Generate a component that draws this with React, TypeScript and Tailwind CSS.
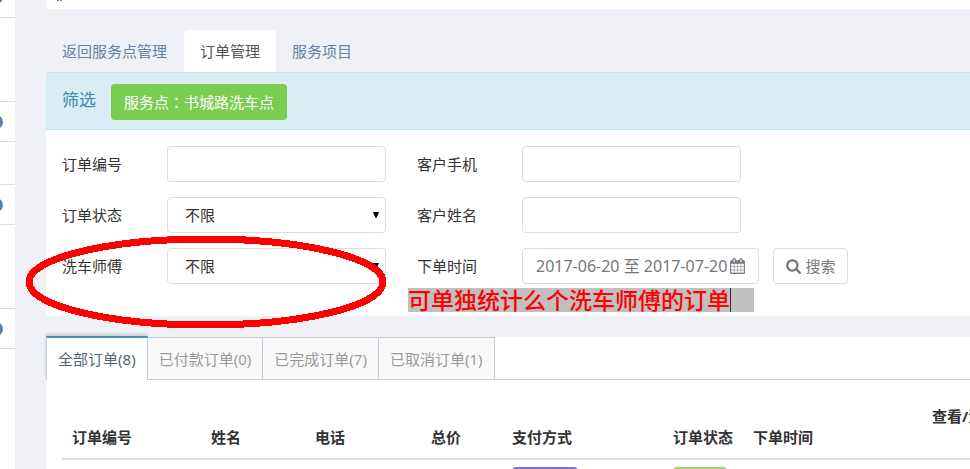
import React, { useState } from 'react';

const NAV = ['返回服务点管理', '订单管理', '服务项目'];

const ORDER_TABS = [
	{ label: '全部订单', count: 8 },
	{ label: '已付款订单', count: 0 },
	{ label: '已完成订单', count: 7 },
	{ label: '已取消订单', count: 1 },
];

const COLUMNS = [
	{ title: '订单编号', width: 'w-[139px]' },
	{ title: '姓名', width: 'w-[104px]' },
	{ title: '电话', width: 'w-[116px]' },
	{ title: '总价', width: 'w-[81px]' },
	{ title: '支付方式', width: 'w-[161px]' },
	{ title: '订单状态', width: 'w-20' },
	{ title: '下单时间', width: 'w-[179px]' },
];

// sidebar rows: height and whether the row carries a badge
const SIDE_ROWS = [
	{ height: 'h-[18px]', badge: 'top-[-10px]' },
	{ height: 'h-[84px]', badge: '' },
	{ height: 'h-10', badge: 'top-[13px]' },
	{ height: 'h-[43px]', badge: '' },
	{ height: 'h-10', badge: 'top-[13px]' },
	{ height: 'h-[84px]', badge: '' },
	{ height: 'h-10', badge: 'top-[13px]' },
];

function CalendarIcon() {
	return (
		<svg viewBox="0 0 1664 1792" className="w-[15px] h-4 fill-current" aria-hidden="true">
			<path d="M128 1664h288v-288h-288v288zm352 0h320v-288h-320v288zm-352-352h288v-320h-288v320zm352 0h320v-320h-320v320zm-352-384h288v-288h-288v288zm736 736h320v-288h-320v288zm-384-736h320v-288h-320v288zm768 736h288v-288h-288v288zm-384-352h320v-320h-320v320zm-352-864v-288q0-13-9.5-22.5t-22.5-9.5h-64q-13 0-22.5 9.5t-9.5 22.5v288q0 13 9.5 22.5t22.5 9.5h64q13 0 22.5-9.5t9.5-22.5zm736 864h288v-320h-288v320zm-384-384h320v-288h-320v288zm384 0h288v-288h-288v288zm32-480v-288q0-13-9.5-22.5t-22.5-9.5h-64q-13 0-22.5 9.5t-9.5 22.5v288q0 13 9.5 22.5t22.5 9.5h64q13 0 22.5-9.5t9.5-22.5zm384-64v1280q0 52-38 90t-90 38h-1408q-52 0-90-38t-38-90v-1280q0-52 38-90t90-38h128v-96q0-66 47-113t113-47h64q66 0 113 47t47 113v96h384v-96q0-66 47-113t113-47h64q66 0 113 47t47 113v96h128q52 0 90 38t38 90z" />
		</svg>
	);
}

function SearchIcon() {
	return (
		<svg viewBox="0 0 1664 1792" className="w-[15px] h-4 fill-current" aria-hidden="true">
			<path d="M1152 832q0-185-131.5-316.5t-316.5-131.5-316.5 131.5-131.5 316.5 131.5 316.5 316.5 131.5 316.5-131.5 131.5-316.5zm512 832q0 52-38 90t-90 38q-54 0-90-38l-343-342q-179 124-399 124-143 0-273.5-55.5t-225-150-150-225-55.5-273.5 55.5-273.5 150-225 225-150 273.5-55.5 273.5 55.5 225 150 150 225 55.5 273.5q0 220-124 399l343 343q37 37 37 90z" />
		</svg>
	);
}

function TextField({ id, label }: { id: string; label: string }) {
	return (
		<>
			<label htmlFor={id}>{label}</label>
			<input
				id={id}
				type="text"
				className="h-9 w-full rounded border border-[#dddddd] bg-white px-3"
			/>
		</>
	);
}

function SelectField({ id, label }: { id: string; label: string }) {
	return (
		<>
			<label htmlFor={id}>{label}</label>
			<div className="relative">
				<select
					id={id}
					className="block h-9 w-full appearance-none rounded border border-[#dddddd] bg-white px-[17px]"
				>
					<option>不限</option>
				</select>
				<svg
					viewBox="0 0 6 6"
					className="pointer-events-none absolute right-[7px] top-[15px] size-[6px]"
					aria-hidden="true"
				>
					<path d="M0 0h6L3.5 6h-1z" />
				</svg>
			</div>
		</>
	);
}

function Sidebar() {
	return (
		<aside className="w-[15px] shrink-0 overflow-hidden bg-white">
			{SIDE_ROWS.map((row, i) => (
				<div
					key={i}
					className={`relative border-b border-[#dddddd] ${row.height}`}
				>
					{row.badge ? (
						<span
							className={`absolute left-[-11px] size-[14px] rounded-full bg-[#5a7fae] ${row.badge}`}
						/>
					) : null}
				</div>
			))}
		</aside>
	);
}

function FilterPanel() {
	return (
		<section className="relative rounded-bl bg-white">
			<div className="flex items-start gap-[15px] border-b border-[#bce8f1] bg-[#d9edf5] px-4 pt-[11px] pb-[9px]">
				<h2 className="text-[17px] leading-8 text-[#3e89ae]">筛选</h2>
				<button
					type="button"
					className="h-9 rounded bg-[#7acd50] px-[13px] text-white"
				>
					服务点
					<span className="font-['Noto_Sans_CJK_TC',sans-serif]">：</span>
					书城路洗车点
				</button>
			</div>
			<form
				className="grid grid-cols-[105px_219px_31px_105px_219px_1fr] items-center gap-y-[15px] px-4 pb-8 pt-4"
				onSubmit={(e) => e.preventDefault()}
			>
				<TextField id="order-no" label="订单编号" />
				<span />
				<TextField id="phone" label="客户手机" />
				<span />

				<SelectField id="status" label="订单状态" />
				<span />
				<TextField id="name" label="客户姓名" />
				<span />

				<SelectField id="worker" label="洗车师傅" />
				<span />
				<label htmlFor="range">下单时间</label>
				<div className="col-span-2 flex gap-[14px] text-[#777777]">
					<button
						id="range"
						type="button"
						className="flex h-9 items-center gap-[3px] whitespace-nowrap rounded border border-[#dddddd] px-[13px] text-base"
					>
						2017-06-20 至 2017-07-20
						<CalendarIcon />
					</button>
					<button
						type="submit"
						className="flex h-9 items-center gap-1 whitespace-nowrap rounded border border-[#dddddd] px-3"
					>
						<SearchIcon />
						搜索
					</button>
				</div>
			</form>

			{/* handwritten notes over the form */}
			<svg
				viewBox="0 0 360 94"
				className="pointer-events-none absolute left-[-20px] top-[163px] h-[94px] w-[360px]"
				shapeRendering="crispEdges"
				aria-hidden="true"
			>
				<ellipse
					cx="180"
					cy="46"
					rx="177"
					ry="43"
					fill="none"
					stroke="#ff0000"
					strokeWidth="7"
				/>
			</svg>
			<p className="absolute left-[362px] top-[215px] flex h-6 w-[346px] items-center whitespace-nowrap bg-[#c0c0c0] text-[23px] leading-6 font-medium text-[#ff0000]">
				可单独统计么个洗车师傅的订单
				<span className="h-6 w-px bg-[#333333]" />
			</p>
		</section>
	);
}

function Orders() {
	const [active, setActive] = useState(0);

	return (
		<section className="mt-[21px] bg-white">
			<div className="flex border-b border-[#c3ccd8]" role="tablist">
				{ORDER_TABS.map((tab, i) => (
					<button
						key={tab.label}
						type="button"
						role="tab"
						aria-selected={i === active}
						onClick={() => setActive(i)}
						className={
							i === active
								? '-mt-px -mb-px h-11 border-x border-t-2 border-x-[#c3ccd8] border-t-[#4c8fbd] bg-white px-[11px] text-[#576373] shadow-[0_-2px_3px_0_rgba(0,0,0,0.15)]'
								: 'h-[42px] border-r border-t border-[#c3ccd8] bg-[#f9f9f9] px-[11px] text-[#999999]'
						}
					>
						{tab.label}({tab.count})
					</button>
				))}
			</div>
			<div className="pl-4 pt-[15px]">
				<table className="w-full table-fixed text-left">
					<thead>
						<tr className="h-[64px] border-b-2 border-[#dddddd] align-bottom text-[#333333]">
							{COLUMNS.map((col) => (
								<th
									key={col.title}
									className={`px-[10px] pb-[10px] leading-[21px] font-bold whitespace-nowrap ${col.width}`}
								>
									{col.title}
								</th>
							))}
							<th className="overflow-hidden pb-[31px] pl-[10px] leading-[21px] font-bold whitespace-nowrap">
								查看/消
							</th>
						</tr>
					</thead>
					<tbody>
						<tr>
							<td colSpan={4} />
							<td className="px-[10px] pt-[7px]">
								<span className="block h-6 w-[66px] rounded bg-[#7f71cb]" />
							</td>
							<td className="pl-[10px] pt-[7px]">
								<span className="block h-6 w-[54px] rounded bg-[#a0d468]" />
							</td>
							<td colSpan={2} />
						</tr>
					</tbody>
				</table>
			</div>
		</section>
	);
}

export default function App() {
	const [page, setPage] = useState(1);

	return (
		<div className="flex h-screen overflow-hidden bg-[#eff1f7] font-['Noto_Sans','Noto_Sans_CJK_SC',sans-serif] text-[15px] leading-5 text-[#333333]">
			<Sidebar />
			<main className="ml-[31px] min-w-0 flex-1">
				<div className="h-[9px] rounded-bl bg-white pl-[11px]">
					<div className="flex gap-px">
						<span className="h-px w-[2px] bg-[#4c8fbd]" />
						<span className="h-px w-[2px] bg-[#4c8fbd]" />
					</div>
				</div>
				<nav className="mt-[21px] flex border-b border-[#dddddd]">
					{NAV.map((item, i) => (
						<a
							key={item}
							href="#"
							onClick={() => setPage(i)}
							className={
								i === page
									? 'ml-px rounded-t bg-white px-4 py-[11px] text-[#555555]'
									: 'px-4 py-[11px] text-[#6680a6]'
							}
						>
							{item}
						</a>
					))}
				</nav>
				<FilterPanel />
				<Orders />
			</main>
		</div>
	);
}
